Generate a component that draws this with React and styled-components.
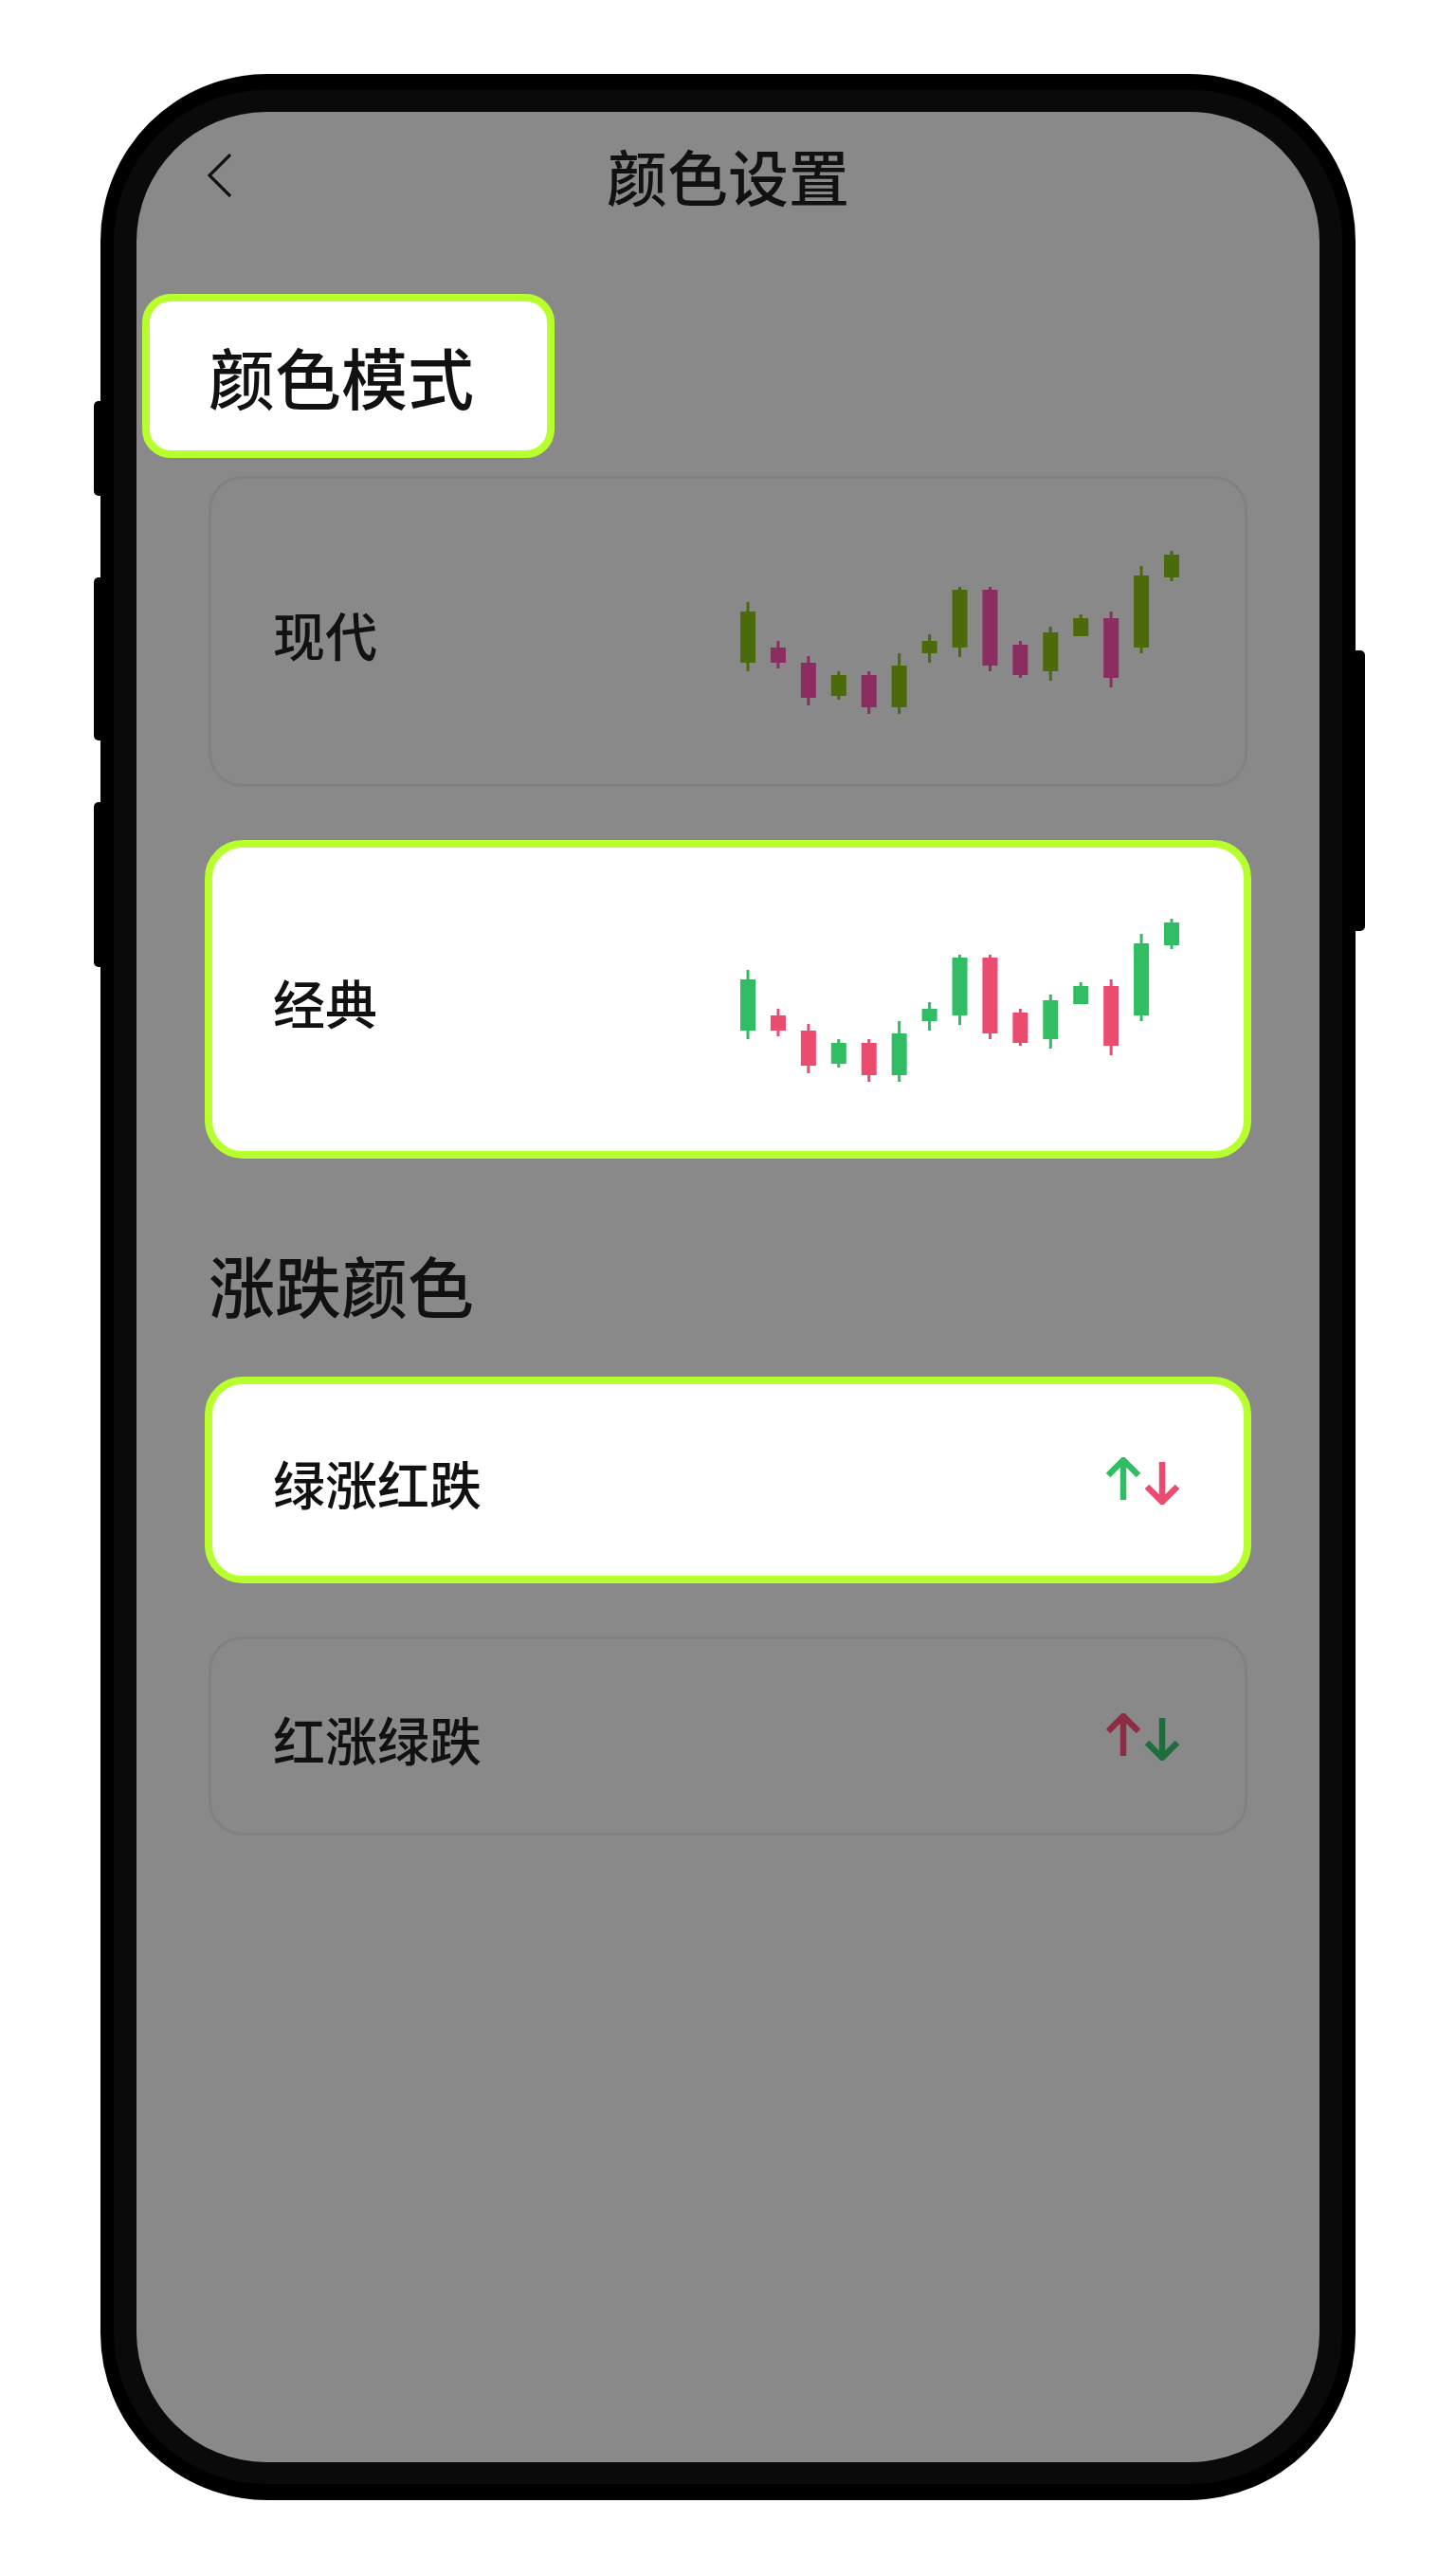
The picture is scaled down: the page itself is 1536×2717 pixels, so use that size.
import React from "react";
import styled, { createGlobalStyle } from "styled-components";

const GlobalStyle = createGlobalStyle`
  html, body { margin: 0; padding: 0; background: #ffffff; }
  body { font-family: "Noto Sans CJK SC", "Noto Sans", sans-serif; color: #111; }
  * { box-sizing: border-box; }
`;

const Page = styled.div`
  min-height: 2717px;
  padding: 78px 0 0 106px;
`;

const Phone = styled.div`
  position: relative;
  width: 1324px;
  height: 2559px;
  background: #000;
  border-radius: 176px;
  padding: 17px 14px;
`;

const SideButton = styled.div`
  position: absolute;
  top: ${(p) => p.$top}px;
  height: ${(p) => p.$h}px;
  width: 10px;
  background: #000;
  ${(p) => (p.$right ? "right: -10px; border-radius: 0 5px 5px 0;" : "left: -7px; border-radius: 5px 0 0 5px;")}
`;

const Bezel = styled.div`
  width: 100%;
  height: 100%;
  background: #0a0a0a;
  border-radius: 160px;
  padding: 23px 24px;
`;

const Screen = styled.div`
  width: 100%;
  height: 100%;
  background: #898989;
  border-radius: 137px;
  display: flex;
  flex-direction: column;
`;

const Header = styled.header`
  height: 132px;
  display: grid;
  grid-template-columns: 1fr auto 1fr;
  align-items: center;
  padding: 0 74px;
`;

const BackButton = styled.button`
  justify-self: start;
  background: none;
  border: none;
  padding: 0;
  width: 28px;
  height: 46px;
  display: flex;
  align-items: center;
  margin-top: 2px;
`;

const Title = styled.h1`
  margin: 0;
  font-size: 64px;
  line-height: 1;
  font-weight: 500;
  color: #111;
  letter-spacing: 0;
`;

const Content = styled.main`
  display: flex;
  flex-direction: column;
  padding-left: 76px;
`;

const HighlightHeading = styled.div`
  margin-top: 60px;
  margin-left: -70px;
  width: 435px;
  height: 173px;
  background: #fff;
  border: 8px solid #b8ff2e;
  border-radius: 30px;
  padding-left: 62px;
  display: flex;
  align-items: center;
`;

const SectionTitle = styled.h2`
  margin: ${(p) => p.$mt || 0}px 0 0 0;
  font-size: 70px;
  line-height: 1;
  font-weight: 500;
  color: #111;
`;

const Card = styled.div`
  margin-top: ${(p) => p.$mt}px;
  width: ${(p) => (p.$selected ? 1104 : 1096)}px;
  height: ${(p) => p.$h + (p.$selected ? 8 : 0)}px;
  ${(p) => (p.$selected ? "margin-left: -4px; margin-bottom: -4px; transform: translateY(-4px);" : "")}
  border: ${(p) => (p.$selected ? "8px solid #b8ff2e" : "3px solid #818181")};
  background: ${(p) => (p.$selected ? "#ffffff" : "transparent")};
  border-radius: ${(p) => (p.$selected ? 40 : 36)}px;
  padding: 0 ${(p) => (p.$selected ? 67 : 68)}px 0 ${(p) => (p.$selected ? 64 : 65)}px;
  display: flex;
  align-items: center;
  justify-content: space-between;
`;

const CardLabel = styled.span`
  font-size: 55px;
  line-height: 1;
  font-weight: 500;
  color: #111;
  margin-top: 4px;
`;

const ChartSvg = styled.svg`
  display: block;
  margin-top: 2px;
`;

const ArrowSvg = styled.svg`
  display: block;
  margin-top: 2px;
`;

const candles = [
  [54, 127, 64, 118, 1],
  [95, 124, 102, 118, 0],
  [111, 163, 118, 155, 0],
  [127, 157, 131, 153, 1],
  [127, 172, 131, 165, 0],
  [108, 172, 121, 165, 1],
  [88, 118, 95, 108, 1],
  [38, 112, 41, 102, 1],
  [38, 127, 41, 121, 0],
  [95, 134, 99, 131, 0],
  [80, 137, 86, 127, 1],
  [67, 90, 71, 90, 1],
  [64, 144, 71, 134, 0],
  [16, 108, 26, 102, 1],
  [0, 32, 4, 28, 1],
];

function Candles({ up, down }) {
  return (
    <ChartSvg width="464" height="172" viewBox="0 0 464 172">
      {candles.map(([wt, wb, bt, bb, isUp], i) => {
        const x = i * 31.93;
        const c = isUp ? up : down;
        return (
          <g key={i} fill={c}>
            <rect x={x + 6.5} y={wt} width="3" height={wb - wt} />
            <rect x={x} y={bt} width="16" height={bb - bt} />
          </g>
        );
      })}
    </ChartSvg>
  );
}

function Arrows({ up, down }) {
  return (
    <ArrowSvg width="78" height="50" viewBox="0 0 78 50">
      <g fill="none" strokeWidth="6.5" strokeLinecap="butt" strokeLinejoin="miter">
        <path d="M18 3 V45" stroke={up} />
        <path d="M2 19 L18 3 L34 19" stroke={up} />
        <path d="M59 5 V47" stroke={down} />
        <path d="M43 31 L59 47 L75 31" stroke={down} />
      </g>
    </ArrowSvg>
  );
}

export default function App() {
  return (
    <>
      <GlobalStyle />
      <Page>
        <Phone>
          <SideButton $top={345} $h={100} />
          <SideButton $top={531} $h={172} />
          <SideButton $top={768} $h={174} />
          <SideButton $right $top={608} $h={296} />
          <Bezel>
            <Screen>
              <Header>
                <BackButton aria-label="返回">
                  <svg width="28" height="46" viewBox="0 0 28 46">
                    <path d="M25 1 L3 23 L25 45" fill="none" stroke="#111" strokeWidth="3.2" />
                  </svg>
                </BackButton>
                <Title>颜色设置</Title>
                <span />
              </Header>
              <Content>
                <HighlightHeading>
                  <SectionTitle>颜色模式</SectionTitle>
                </HighlightHeading>
                <Card $mt={19} $h={328}>
                  <CardLabel>现代</CardLabel>
                  <Candles up="#4b6b0b" down="#8c2d62" />
                </Card>
                <Card $mt={60} $h={328} $selected>
                  <CardLabel>经典</CardLabel>
                  <Candles up="#30bd63" down="#ea4b6e" />
                </Card>
                <SectionTitle $mt={98}>涨跌颜色</SectionTitle>
                <Card $mt={66} $h={210} $selected>
                  <CardLabel>绿涨红跌</CardLabel>
                  <Arrows up="#30bd63" down="#ea4b6e" />
                </Card>
                <Card $mt={56} $h={210}>
                  <CardLabel>红涨绿跌</CardLabel>
                  <Arrows up="#8c2d45" down="#1e6e3d" />
                </Card>
              </Content>
            </Screen>
          </Bezel>
        </Phone>
      </Page>
    </>
  );
}
